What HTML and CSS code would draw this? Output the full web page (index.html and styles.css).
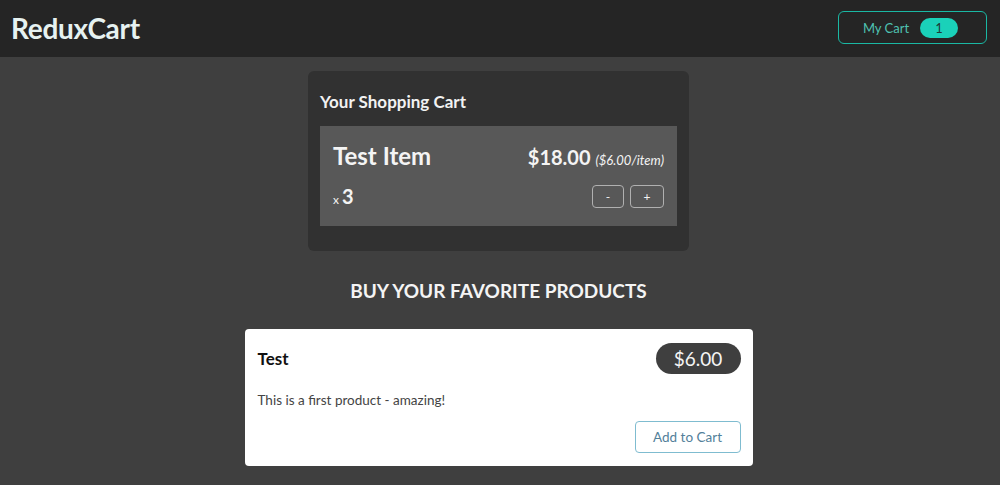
FILE: index.html
```html
<!DOCTYPE html>
<html>
<head>
<meta charset="utf-8">
<link rel="stylesheet" href="styles.css">
</head>
<body>
<header class="header">
  <h1 class="logo">ReduxCart</h1>
  <button class="cart-btn"><span>My Cart</span><span class="badge">1</span></button>
</header>
<main class="main">
  <section class="cart">
    <h2 class="cart-title">Your Shopping Cart</h2>
    <div class="item">
      <div class="item-top">
        <h3 class="item-name">Test Item</h3>
        <div class="item-price">$18.00 <span class="per">($6.00/item)</span></div>
      </div>
      <div class="item-bottom">
        <div class="qty">x <span class="qty-num">3</span></div>
        <div class="actions">
          <button class="act">-</button>
          <button class="act">+</button>
        </div>
      </div>
    </div>
  </section>
  <section class="products">
    <h2 class="products-title">BUY YOUR FAVORITE PRODUCTS</h2>
    <div class="product">
      <div class="product-top">
        <h3 class="product-name">Test</h3>
        <div class="price">$6.00</div>
      </div>
      <p class="desc">This is a first product - amazing!</p>
      <div class="product-actions">
        <button class="add">Add to Cart</button>
      </div>
    </div>
  </section>
</main>
</body>
</html>
```
FILE: styles.css
```css
* { box-sizing: border-box; }
html, body { margin: 0; padding: 0; }
body {
  background: #3f3f3f;
  font-family: Lato, "Open Sans", sans-serif;
  height: 485px;
  overflow: hidden;
}
h1, h2, h3, p { margin: 0; }
button { font-family: inherit; cursor: pointer; }
.header {
  height: 57px;
  background: #252525;
  display: flex;
  align-items: center;
  justify-content: space-between;
  padding: 0 13px 2px 11px;
}
.logo {
  color: #e6f2f1;
  font-size: 28px;
  font-weight: 700;
  letter-spacing: -0.3px;
}
.cart-btn {
  width: 149px;
  height: 33px;
  background: transparent;
  border: 1px solid #1ab8a4;
  border-radius: 6px;
  color: #4fc2b2;
  font-size: 13px;
  display: flex;
  align-items: center;
  justify-content: center;
  gap: 11px;
  padding: 0 4px 0 0;
}
.badge {
  background: #1ad1b9;
  color: #1f3a36;
  border-radius: 11px;
  width: 38px;
  height: 20px;
  display: flex;
  align-items: center;
  justify-content: center;
  font-size: 13px;
}
.main {
  display: flex;
  flex-direction: column;
  align-items: center;
  padding: 14px 3px 0 0;
}
.cart {
  width: 381px;
  background: #313131;
  border-radius: 6px;
  padding: 20px 12px 25px 12px;
}
.cart-title {
  color: #f2f2f2;
  font-size: 17px;
  font-weight: 700;
  margin-bottom: 14px;
}
.item {
  background: #585858;
  padding: 15px 13px 18px 13px;
  color: #f4f4f4;
}
.item-top {
  display: flex;
  justify-content: space-between;
  align-items: baseline;
}
.item-name {
  font-size: 24px;
  font-weight: 700;
}
.item-price {
  font-size: 20px;
  font-weight: 700;
}
.per {
  font-size: 13px;
  font-weight: 400;
  font-style: italic;
}
.item-bottom {
  display: flex;
  justify-content: space-between;
  align-items: center;
  margin-top: 14px;
}
.qty {
  font-size: 12px;
}
.qty-num {
  font-size: 20px;
  font-weight: 700;
}
.actions {
  display: flex;
  gap: 6px;
}
.act {
  width: 32px;
  height: 23px;
  background: transparent;
  border: 1px solid #b0b0b0;
  border-radius: 4px;
  color: #f4f4f4;
  font-size: 12px;
  padding: 0;
}
.act + .act { width: 34px; }
.products {
  width: 508px;
  margin-top: 28px;
}
.products-title {
  text-align: center;
  color: #f4f4f4;
  font-size: 19px;
  font-weight: 700;
  margin-bottom: 27px;
}
.product {
  background: #ffffff;
  border-radius: 4px;
  padding: 14px 12px 13px 13px;
}
.product-top {
  display: flex;
  justify-content: space-between;
  align-items: center;
}
.product-name {
  font-size: 17px;
  font-weight: 700;
  color: #111;
}
.price {
  background: #3f3f3f;
  color: #f4f4f4;
  font-size: 19px;
  border-radius: 16px;
  width: 85px;
  height: 31px;
  display: flex;
  align-items: center;
  justify-content: center;
}
.desc {
  margin-top: 18px;
  color: #444;
  font-size: 13.5px;
}
.product-actions {
  display: flex;
  justify-content: flex-end;
  margin-top: 13px;
}
.add {
  width: 106px;
  height: 32px;
  background: #fff;
  border: 1px solid #7fbcd0;
  border-radius: 4px;
  color: #52809a;
  font-size: 13.5px;
}
```
